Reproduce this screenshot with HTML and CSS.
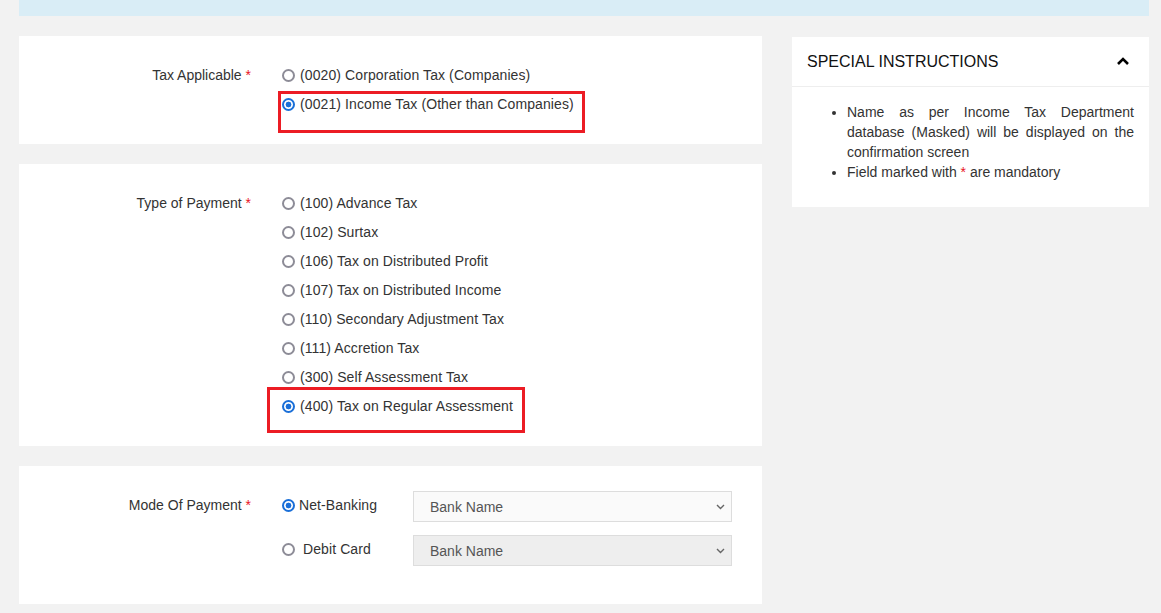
FILE: index.html
```html
<!DOCTYPE html>
<html lang="en">
<head>
    <meta charset="UTF-8">
    <meta name="viewport" content="width=device-width, initial-scale=1.0">
    <title>Challan Payment</title>
    <link rel="stylesheet" href="styles.css">
</head>
<body>
    <div class="page">
        <div class="top-bar"></div>

        <div class="main-col">
            <div class="card">
                <div class="form-row">
                    <div class="field-label">Tax Applicable <span class="req">*</span></div>
                    <div class="options">
                        <label class="option"><input type="radio" name="tax">(0020) Corporation Tax (Companies)</label>
                        <label class="option marked">
                            <input type="radio" name="tax" checked>(0021) Income Tax (Other than Companies)
                            <span class="highlight hl-tax"></span>
                        </label>
                    </div>
                </div>
            </div>

            <div class="card">
                <div class="form-row">
                    <div class="field-label">Type of Payment <span class="req">*</span></div>
                    <div class="options">
                        <label class="option"><input type="radio" name="type">(100) Advance Tax</label>
                        <label class="option"><input type="radio" name="type">(102) Surtax</label>
                        <label class="option"><input type="radio" name="type">(106) Tax on Distributed Profit</label>
                        <label class="option"><input type="radio" name="type">(107) Tax on Distributed Income</label>
                        <label class="option"><input type="radio" name="type">(110) Secondary Adjustment Tax</label>
                        <label class="option"><input type="radio" name="type">(111) Accretion Tax</label>
                        <label class="option"><input type="radio" name="type">(300) Self Assessment Tax</label>
                        <label class="option marked">
                            <input type="radio" name="type" checked>(400) Tax on Regular Assessment
                            <span class="highlight hl-type"></span>
                        </label>
                    </div>
                </div>
            </div>

            <div class="card card-mode">
                <div class="form-row">
                    <div class="field-label mode-label">Mode Of Payment <span class="req">*</span></div>
                    <div class="mode-list">
                        <div class="mode-item">
                            <label class="mode-option"><input type="radio" name="mode" checked>Net-Banking</label>
                            <div class="select-wrap">
                                <select class="bank-select">
                                    <option>Bank Name</option>
                                </select>
                                <svg class="select-arrow" width="9" height="6" viewBox="0 0 9 6">
                                    <polyline points="1,1 4.5,4.5 8,1" fill="none" stroke="#666" stroke-width="1.4"/>
                                </svg>
                            </div>
                        </div>
                        <div class="mode-item">
                            <label class="mode-option"><input type="radio" name="mode">&nbsp;Debit Card</label>
                            <div class="select-wrap">
                                <select class="bank-select" disabled>
                                    <option>Bank Name</option>
                                </select>
                                <svg class="select-arrow" width="9" height="6" viewBox="0 0 9 6">
                                    <polyline points="1,1 4.5,4.5 8,1" fill="none" stroke="#666" stroke-width="1.4"/>
                                </svg>
                            </div>
                        </div>
                    </div>
                </div>
            </div>
        </div>

        <div class="side-col">
            <div class="side-card">
                <div class="side-head">
                    <span>SPECIAL INSTRUCTIONS</span>
                    <svg class="chevron" width="14" height="10" viewBox="0 0 14 10">
                        <polyline points="2,8 7,3 12,8" fill="none" stroke="#000" stroke-width="2.6"/>
                    </svg>
                </div>
                <ul class="side-list">
                    <li>Name as per Income Tax Department database (Masked) will be displayed on the confirmation screen</li>
                    <li>Field marked with <span class="req">*</span> are mandatory</li>
                </ul>
            </div>
        </div>
    </div>
</body>
</html>
```

FILE: styles.css
```css
body {
    font-family: "Liberation Sans", Arial, sans-serif;
    font-size: 14px;
    color: #333;
    background-color: #f2f2f2;
    margin: 0;
    padding: 0;
}

.page {
    display: grid;
    grid-template-columns: 743px 357px;
    column-gap: 30px;
    padding: 0 12px 0 19px;
}

.top-bar {
    grid-column: 1 / 3;
    height: 16px;
    background-color: #d9edf6;
    margin-bottom: 20px;
}

.main-col {
    display: flex;
    flex-direction: column;
    gap: 20px;
}

.card {
    background-color: #fff;
    padding: 24px 0 26px;
}

.card-mode {
    padding: 25px 0 38px;
}

.form-row {
    display: grid;
    grid-template-columns: 232px 1fr;
    column-gap: 31px;
}

.field-label {
    text-align: right;
    line-height: 29px;
    padding-top: 1px;
}

.req {
    color: #e8141c;
}

.options {
    display: flex;
    flex-direction: column;
}

.option {
    position: relative;
    display: flex;
    align-items: center;
    height: 29px;
    letter-spacing: 0.1px;
}

.option input,
.mode-option input {
    appearance: none;
    -webkit-appearance: none;
    box-sizing: border-box;
    width: 13px;
    height: 13px;
    margin: 1px 5px 0 0;
    border: 2px solid #8d8c97;
    border-radius: 50%;
    background-color: #fff;
    flex-shrink: 0;
}

.option input:checked,
.mode-option input:checked {
    border-color: #1a6fd8;
    background: radial-gradient(circle, #1a6fd8 0 2.6px, #fff 3.2px);
}

.highlight {
    position: absolute;
    border: 3px solid #ec1c24;
    box-sizing: border-box;
    pointer-events: none;
}

.hl-tax {
    left: -4px;
    top: 2px;
    width: 307px;
    height: 42px;
}

.hl-type {
    left: -15px;
    top: -4px;
    width: 258px;
    height: 46px;
}

.mode-label {
    line-height: 28px;
    padding-top: 0;
}

.mode-list {
    display: flex;
    flex-direction: column;
    gap: 13px;
}

.mode-item {
    display: flex;
    align-items: center;
}

.mode-option {
    display: flex;
    align-items: center;
    width: 131px;
    margin-top: -3px;
    letter-spacing: 0.1px;
}

.mode-option input {
    margin-right: 4px;
}

.select-wrap {
    position: relative;
}

.bank-select {
    appearance: none;
    -webkit-appearance: none;
    display: block;
    width: 319px;
    height: 31px;
    padding: 0 16px;
    font-family: "Liberation Sans", Arial, sans-serif;
    font-size: 14px;
    color: #555;
    background-color: #fafafa;
    border: 1px solid #ddd;
    border-radius: 0;
}

.bank-select:disabled {
    background-color: #eee;
    color: #555;
    opacity: 1;
}

.select-arrow {
    position: absolute;
    right: 7px;
    top: 13px;
    pointer-events: none;
}

.side-col {
    padding-top: 1px;
}

.side-card {
    background-color: #fff;
}

.side-head {
    display: flex;
    align-items: center;
    justify-content: space-between;
    height: 49px;
    padding: 0 19px 0 15px;
    border-bottom: 1px solid #eee;
    font-size: 16px;
    color: #111;
}

.chevron {
    display: block;
    margin-top: -1px;
}

.side-list {
    margin: 0;
    padding: 15px 15px 25px 55px;
    line-height: 20px;
    text-align: justify;
}
```
